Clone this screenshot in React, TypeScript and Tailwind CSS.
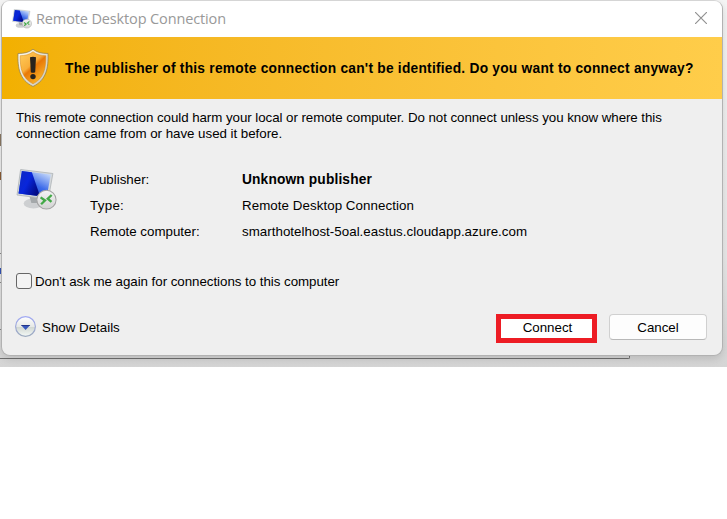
import React from "react";

function Computer({ className }: { className: string }) {
  return (
    <svg viewBox="0 0 40 42" preserveAspectRatio="none" className={className} aria-hidden="true">
      <defs>
        <linearGradient id="screen" x1="0.4" y1="0.9" x2="0.9" y2="0.1">
          <stop offset="0" stopColor="#1a49df" />
          <stop offset="0.4" stopColor="#3d6bea" />
          <stop offset="1" stopColor="#c3d7fa" />
        </linearGradient>
        <linearGradient id="screenLeft" x1="0" y1="0" x2="1" y2="0.6">
          <stop offset="0" stopColor="#1029be" />
          <stop offset="0.5" stopColor="#0826dc" />
          <stop offset="1" stopColor="#020a85" />
        </linearGradient>
        <linearGradient id="badge" x1="0" y1="0" x2="0" y2="1">
          <stop offset="0" stopColor="#f4f4f4" />
          <stop offset="1" stopColor="#d2d2d2" />
        </linearGradient>
      </defs>
      <ellipse cx="17" cy="34.5" rx="9.5" ry="5" fill="#cdcfd1" />
      <path d="M13 27 L22 29 L21 34 L15 34Z" fill="#a4a8aa" />
      <path d="M4.5 0.5 L36 4.5 L31.5 30 L1 26Z" fill="#d5d9dc" stroke="#aeb3b7" strokeWidth="0.8" />
      <path d="M5.7 2 L33.9 5.5 L30 28 L2.5 24.5Z" fill="url(#screen)" />
      <path d="M5.7 2 L15.5 3.2 L23.5 27.2 L2.5 24.5Z" fill="url(#screenLeft)" />
      <circle cx="29.7" cy="30.7" r="9.4" fill="url(#badge)" stroke="#a4a4a4" strokeWidth="1" />
      <path d="M24 28.4 L28.3 31.5 L24.5 35.2 M34.8 26 L31 29.6 L34.6 32.8" fill="none" stroke="#43a947" strokeWidth="2.3" />
    </svg>
  );
}

function Shield() {
  return (
    <svg viewBox="0 0 34 40" className="h-[40px] w-[34px]" aria-hidden="true">
      <defs>
        <linearGradient id="shieldFill" x1="0.1" y1="0" x2="0.8" y2="1">
          <stop offset="0" stopColor="#ffcb58" />
          <stop offset="0.42" stopColor="#f9ae3a" />
          <stop offset="0.52" stopColor="#e87807" />
          <stop offset="1" stopColor="#ffc02d" />
        </linearGradient>
        <linearGradient id="shieldEdge" x1="0" y1="0" x2="1" y2="1">
          <stop offset="0" stopColor="#fffdf0" />
          <stop offset="1" stopColor="#c9c6b8" />
        </linearGradient>
      </defs>
      <path d="M17 1.2 C21 4.5 26 5.5 32 5.5 C32.5 20 30.5 32 17 38.5 C3.5 32 1.5 20 2 5.5 C8 5.5 13 4.5 17 1.2Z" fill="url(#shieldEdge)" stroke="#9b844d" strokeWidth="0.8" />
      <path d="M17 3.8 C20.5 6.7 25 7.7 29.8 7.7 C30 20 28 30.5 17 35.8 C6 30.5 4 20 4.2 7.7 C9 7.7 13.5 6.7 17 3.8Z" fill="url(#shieldFill)" stroke="#d98614" strokeWidth="0.5" />
      <path d="M14 9.3 Q17 8.3 20 9.3 L19.2 24.3 Q17 25.4 14.8 24.3Z" fill="#28231d" />
      <circle cx="17" cy="28.6" r="2.7" fill="#28231d" />
    </svg>
  );
}

function DetailsIcon() {
  return (
    <svg viewBox="0 0 22 22" className="size-[22px]" aria-hidden="true">
      <defs>
        <linearGradient id="details" x1="0" y1="0" x2="0" y2="1">
          <stop offset="0" stopColor="#ffffff" />
          <stop offset="0.5" stopColor="#e7e9e7" />
          <stop offset="0.55" stopColor="#d2d8d3" />
          <stop offset="1" stopColor="#f5faf7" />
        </linearGradient>
        <linearGradient id="detailsEdge" x1="0" y1="0" x2="0" y2="1">
          <stop offset="0" stopColor="#a1a9f3" />
          <stop offset="1" stopColor="#9caabd" />
        </linearGradient>
      </defs>
      <circle cx="10.5" cy="10.5" r="9.9" fill="url(#details)" stroke="url(#detailsEdge)" strokeWidth="1.2" />
      <path d="M6 9 H15.2 L10.6 14Z" fill="#3657bd" />
      <path d="M6 9 H15.2 L14.2 10.1 H7Z" fill="#233587" />
    </svg>
  );
}

export default function App() {
  return (
    <main className="h-[519px] w-[727px] overflow-hidden bg-white font-['Liberation_Sans',Arial,sans-serif] text-[13.33px] leading-4 text-black">
      <div className="relative h-[367px] overflow-hidden bg-linear-to-b from-[#f5f5f5] from-0% via-[#e9e9e9] via-70% to-[#d5d5d5]">
        <i className="absolute left-0 top-[134px] h-3 w-px bg-[#8a7762]" />
        <i className="absolute left-0 top-[172px] h-2 w-px bg-[#8a5b32]" />
        <i className="absolute left-0 top-[253px] h-px w-[2px] bg-[#888]" />
        <i className="absolute left-0 top-[268px] h-[6px] w-px bg-[#3452b4]" />
        <i className="absolute left-0 top-[282px] h-px w-[2px] bg-[#888]" />
        <i className="absolute left-0 top-[329px] h-px w-[2px] bg-[#888]" />
        <i className="absolute left-0 top-[350px] h-[9px] w-[630px] rounded-br-[2px] border-r border-b border-[#6f6f6f]" />
        <section className="relative ml-px flex h-[356px] w-[722px] flex-col overflow-hidden rounded-[9px] border border-[#b2b2b2] border-t-[#d5d5d5] bg-[#efefef] shadow-[0_3px_9px_#0002]">
          <header className="flex h-9 shrink-0 items-center justify-between bg-white pl-[10px] pr-[15px]">
            <div className="flex items-center">
              <Computer className="-mt-px h-[20px] w-[20px]" />
              <h1 className="ml-[4px] whitespace-nowrap font-['Open_Sans',sans-serif] text-[14.5px] leading-5 tracking-[-0.13px] text-[#999]">Remote Desktop Connection</h1>
            </div>
            <svg viewBox="0 0 12 12" className="-mt-[2px] size-3 text-[#929292]" aria-label="Close"><path d="M0 0 12 12M12 0 0 12" stroke="currentColor" strokeWidth="1.2" /></svg>
          </header>
          <div className="flex h-[62px] shrink-0 items-center bg-linear-to-r from-[#f2b000] to-[#ffcd4a] pl-[14px]">
            <Shield />
            <strong className="ml-[15px] mt-px whitespace-nowrap text-[13.75px] tracking-[0.24px]">The publisher of this remote connection can't be identified. Do you want to connect anyway?</strong>
          </div>
          <div className="flex grow flex-col pl-[14px] pr-[15px] pt-[11px]">
            <p className="whitespace-nowrap tracking-[-0.057px]">This remote connection could harm your local or remote computer. Do not connect unless you know where this<br /><span className="tracking-[-0.03px]">connection came from or have used it before.</span></p>
            <div className="mt-[27px] flex">
              <Computer className="h-[42px] w-[41px]" />
              <dl className="ml-[33px] mt-[3px] grid grid-cols-[152px_auto] gap-y-[10px] whitespace-nowrap">
                <dt>Publisher:</dt><dd className="text-[13.75px] font-bold leading-4 tracking-[0.14px]">Unknown publisher</dd>
                <dt className="tracking-[0.3px]">Type:</dt><dd className="tracking-[0.06px]">Remote Desktop Connection</dd>
                <dt>Remote computer:</dt><dd className="tracking-[0.03px]">smarthotelhost-5oal.eastus.cloudapp.azure.com</dd>
              </dl>
            </div>
            <label className="mt-[33px] flex h-4 items-center gap-[3px] whitespace-nowrap tracking-[-0.04px]">
              <span className="size-4 rounded-[3px] border border-[#666] bg-[#f3f3f3]" /><span className="pt-[2px]">Don't ask me again for connections to this computer</span>
            </label>
            <div className="mt-[24px] flex items-start">
              <div className="-ml-px mt-[3px] flex items-center gap-[5px]"><DetailsIcon /><span className="pt-[2px]">Show Details</span></div>
              <button className="ml-auto mt-px h-[29px] w-[101px] border-5 border-[#ed1c24] bg-white pl-[2px] pb-[2px] leading-4">Connect</button>
              <button className="ml-3 mt-px h-[26px] w-[98px] rounded-[4px] border border-[#d0d0d0] border-b-[#b8b8b8] bg-[#fdfdfd] pt-[2px] leading-4">Cancel</button>
            </div>
          </div>
        </section>
      </div>
    </main>
  );
}
